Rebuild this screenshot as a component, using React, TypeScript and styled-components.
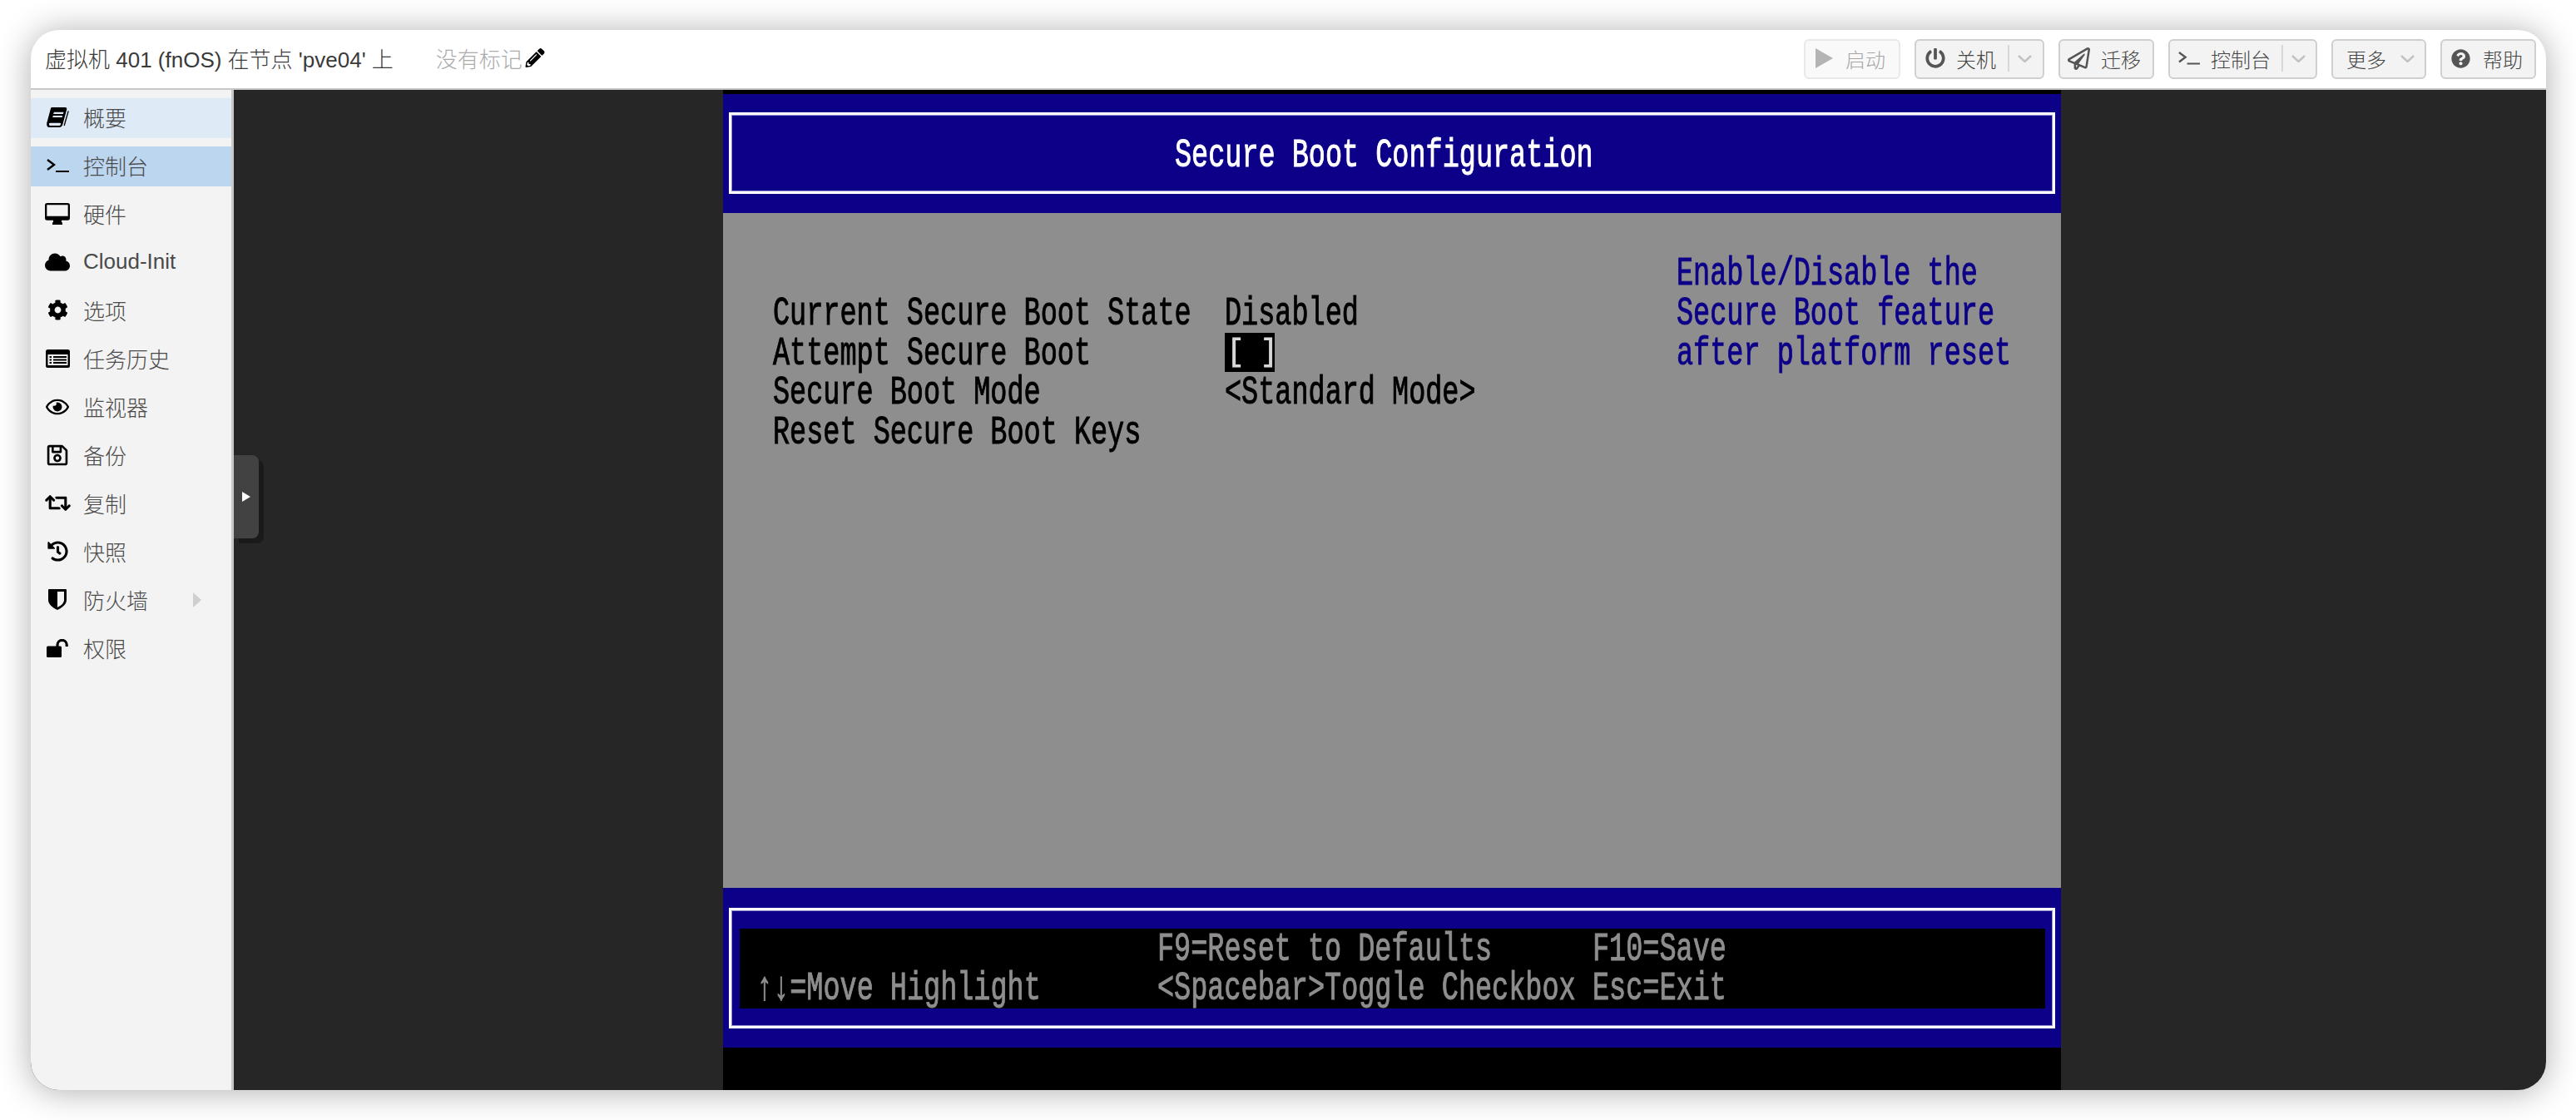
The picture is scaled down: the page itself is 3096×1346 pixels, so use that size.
import React from "react";
import styled, { createGlobalStyle } from "styled-components";
import {
  FaCloud, FaCog, FaRegEye, FaRegSave, FaRetweet, FaHistory,
  FaPencilAlt, FaPowerOff, FaRegPaperPlane, FaQuestionCircle,
} from "react-icons/fa";

const COL = 20.1;
const ROW = 47.75;

const Global = createGlobalStyle`
  html, body { margin: 0; padding: 0; background: #fff; }
  body { font-family: "Liberation Sans", "Noto Sans CJK SC", sans-serif; font-weight: 300; }
`;

const Page = styled.div`
  width: 3096px;
  height: 1346px;
  padding: 36px 36px 36px 37px;
  box-sizing: border-box;
  overflow: hidden;
`;
const Win = styled.div`
  width: 3023px;
  height: 1274px;
  border-radius: 34px;
  box-shadow: 0 2px 40px rgba(0, 0, 0, 0.32);
  overflow: hidden;
  display: flex;
  flex-direction: column;
  background: #fff;
`;
const Header = styled.header`
  flex: none;
  height: 70px;
  border-bottom: 2px solid #c8c8c8;
  display: flex;
  align-items: center;
  padding: 0 12px 0 17px;
`;
const Title = styled.div`
  font-size: 26px;
  color: #3a3a3a;
  white-space: pre;
  padding-bottom: 3px;
`;
const Tags = styled.div`
  margin-left: 51px;
  padding-bottom: 3px;
  font-size: 26px;
  color: #ababab;
  display: flex;
  align-items: center;
  gap: 3px;
  svg { color: #000; width: 24px; height: 23px; }
`;
const Toolbar = styled.div`
  margin-left: auto;
  display: flex;
  gap: 17px;
`;
const Btn = styled.div<{ $w: number; $pl: number; $disabled?: boolean }>`
  box-sizing: border-box;
  width: ${(p) => p.$w}px;
  height: 48px;
  padding-left: ${(p) => p.$pl}px;
  padding-bottom: 2px;
  border-radius: 6px;
  border: 2px solid ${(p) => (p.$disabled ? "#e9e9e9" : "#cfcfcf")};
  background: ${(p) => (p.$disabled ? "#f9f9f9" : "#f3f3f3")};
  color: ${(p) => (p.$disabled ? "#a6a6a6" : "#444")};
  display: flex;
  align-items: center;
  font-size: 24px;
  white-space: nowrap;
`;
const BtnIcon = styled.span<{ $w: number; $gap: number; $dim?: boolean }>`
  width: ${(p) => p.$w}px;
  margin-right: ${(p) => p.$gap}px;
  display: flex;
  color: ${(p) => (p.$dim ? "#b4b4b4" : "#555")};
  svg { width: 100%; height: auto; display: block; }
`;
const Sep = styled.span<{ $l: number }>`
  width: 2px;
  height: 32px;
  margin: 0 10px 0 ${(p) => p.$l}px;
  background: #d8d8d8;
`;
const Chevron = styled.svg<{ $l?: number }>`
  width: 17px;
  height: 9px;
  margin-left: ${(p) => p.$l ?? 0}px;
  fill: none;
  stroke: #c2c2c2;
  stroke-width: 2.5;
`;
const Main = styled.main`
  flex: 1;
  min-height: 0;
  display: flex;
  position: relative;
  background: #262626;
`;
const Sidebar = styled.nav`
  flex: none;
  box-sizing: border-box;
  width: 244px;
  padding-top: 10px;
  background: #f3f3f3;
  border-right: 3px solid #c8c8c8;
  display: flex;
  flex-direction: column;
  gap: 10px;
`;
const NavItem = styled.div<{ $state?: "hover" | "active" }>`
  box-sizing: border-box;
  height: 48px;
  display: flex;
  align-items: center;
  padding: 0 0 3px 14px;
  font-size: 26px;
  color: #4a4a4a;
  position: relative;
  background: ${(p) => (p.$state === "hover" ? "#dfeaf7" : p.$state === "active" ? "#bcd6f0" : "transparent")};
`;
const NavIcon = styled.span`
  flex: none;
  width: 36px;
  margin-right: 13px;
  display: flex;
  justify-content: center;
  color: #000;
  svg { display: block; }
`;
const NavArrow = styled.span`
  margin-left: auto;
  margin-right: 36px;
  width: 0;
  height: 0;
  border-style: solid;
  border-width: 9px 0 9px 10px;
  border-color: transparent transparent transparent #cfcfcf;
`;
const Toggle = styled.div`
  position: absolute;
  left: 244px;
  top: 439px;
  width: 30px;
  height: 100px;
  box-sizing: border-box;
  background: #424242;
  border-radius: 0 8px 8px 0;
  box-shadow: 6px 6px 0 #1a1a1a;
  display: flex;
  align-items: center;
  padding-left: 10px;
`;
const ToggleArrow = styled.span`
  width: 0;
  height: 0;
  border-style: solid;
  border-width: 6px 0 6px 10px;
  border-color: transparent transparent transparent #fff;
`;
const Screen = styled.div`
  flex: none;
  width: 1608px;
  margin-left: 588px;
  padding-top: 5px;
  box-sizing: border-box;
  background: #000;
  display: flex;
  flex-direction: column;
`;
const Banner = styled.div`
  flex: none;
  height: 143px;
  box-sizing: border-box;
  padding: 22px 7px 23px;
  background: #0d0088;
`;
const Frame = styled.div`
  box-sizing: border-box;
  height: 100%;
  border: 3px solid #fff;
  outline: 1px solid #8f8bd0;
  outline-offset: -4px;
  display: flex;
  align-items: center;
`;
const TitleFrame = styled(Frame)`
  padding: 3px 0 0 ${27 * COL - 10}px;
`;
const FooterFrame = styled(Frame)`
  padding: 0 9px 0 10px;
`;
const Body = styled.div`
  flex: none;
  height: 811px;
  box-sizing: border-box;
  padding: 48px 0 0 ${3 * COL}px;
  background: #8e8e8e;
  display: grid;
  grid-template-columns: ${27 * COL}px ${27 * COL}px 1fr;
  grid-auto-rows: ${ROW}px;
`;
const Foot = styled.div`
  flex: none;
  height: 192px;
  box-sizing: border-box;
  padding: 24px 7px 23px;
  background: #0d0088;
`;
const FootGrid = styled.div`
  flex: 1;
  height: 96px;
  box-sizing: border-box;
  padding-left: ${COL}px;
  background: #000;
  display: grid;
  grid-template-columns: ${24 * COL}px ${26 * COL}px 1fr;
  grid-auto-rows: ${ROW}px;
`;
const BiosText = styled.div<{ $c: string }>`
  font-family: "Liberation Mono", monospace;
  font-weight: 400;
  font-size: 48px;
  line-height: ${ROW}px;
  height: ${ROW}px;
  width: 0;
  white-space: pre;
  color: ${(p) => p.$c};
  -webkit-text-stroke: 1px ${(p) => p.$c};
  filter: blur(0.35px);
  transform: translateY(2px) scaleX(0.698);
  transform-origin: left center;
`;
const Highlight = styled.div`
  width: ${3 * COL}px;
  height: ${ROW}px;
  background: #000;
`;
const Brackets = styled(BiosText)`
  font-size: 36px;
  transform: translateX(3px) scaleX(0.93);
`;

const Terminal = ({ w = 27 }: { w?: number }) => (
  <svg width={w} height={(w * 16) / 27} viewBox="0 0 27 16" fill="none" stroke="currentColor" style={{ display: "block" }}>
    <polyline points="1,1 9,7 1,13" strokeWidth="2.4" />
    <line x1="11" y1="15" x2="27" y2="15" strokeWidth="2.2" />
  </svg>
);
const Shield = () => (
  <svg width="22" height="25" viewBox="0 0 22 25">
    <path
      fillRule="evenodd"
      d="M1 0H21a1 1 0 0 1 1 1V13C22 19 15 23 11 25C7 23 0 19 0 13V1A1 1 0 0 1 1 0ZM11 3V22C14 20.5 19 17.500 19 13V3Z"
      fill="currentColor"
    />
  </svg>
);
const Book = () => (
  <svg width="27" height="24" viewBox="0 0 80 72">
    <path
      fill="currentColor"
      fillRule="evenodd"
      d="M18 0H66Q74 0 72 8L58 60Q55 72 45 72H9Q0 72 0 60Q0 56 2 50L14 6Q15 0 18 0ZM26 17H61L59 24H24ZM23 30H57L55 36H21ZM8 61Q7 56 12 56H47Q52 56 51 60Q50 66 45 66H12Q8 66 8 61Z"
    />
    <path fill="none" stroke="currentColor" strokeWidth="4" d="M78 13L63 66" />
  </svg>
);
const Desktop = () => (
  <svg width="30" height="26" viewBox="0 0 90 78">
    <path
      fill="currentColor"
      fillRule="evenodd"
      d="M8 0H82A8 8 0 0 1 90 8V54A8 8 0 0 1 82 62H60V70H63V78H27V70H30V62H8A8 8 0 0 1 0 54V8A8 8 0 0 1 8 0ZM7 7V47H83V7Z"
    />
  </svg>
);
const ListAlt = () => (
  <svg width="29" height="22" viewBox="0 0 29 22">
    <path
      fill="currentColor"
      fillRule="evenodd"
      d="M2.500 0H26.500A2.500 2.500 0 0 1 29 2.500V19.500A2.500 2.500 0 0 1 26.500 22H2.500A2.500 2.500 0 0 1 0 19.500V2.500A2.500 2.500 0 0 1 2.500 0ZM2.500 6V19H26.500V6Z"
    />
    <path fill="currentColor" d="M4.500 8H7V10H4.500ZM9 8H25V10H9ZM4.500 11.500H7V13.500H4.500ZM9 11.500H25V13.500H9ZM4.500 15H7V17H4.500ZM9 15H25V17H9Z" />
  </svg>
);
const Unlock = () => (
  <svg width="26" height="22" viewBox="0 0 26 22">
    <path fill="currentColor" d="M1.500 8.500H16.500A1.500 1.500 0 0 1 18 10V20.500A1.500 1.500 0 0 1 16.500 22H1.500A1.500 1.500 0 0 1 0 20.500V10A1.500 1.500 0 0 1 1.500 8.500Z" />
    <path fill="none" stroke="currentColor" strokeWidth="3.200" d="M13 9V7A5.500 5.500 0 0 1 24.200 7V9" />
  </svg>
);
const Play = () => (
  <svg viewBox="0 0 21 24">
    <polygon fill="currentColor" points="0,0 21,12 0,24" />
  </svg>
);
const ChevronDown = ({ l }: { l?: number }) => (
  <Chevron $l={l} viewBox="0 0 17 9">
    <polyline points="1,1 8.500,8 16,1" />
  </Chevron>
);

const nav = [
  { t: "概要", i: <Book />, s: "hover" as const },
  { t: "控制台", i: <Terminal />, s: "active" as const },
  { t: "硬件", i: <Desktop /> },
  { t: "Cloud-Init", i: <FaCloud size={30} /> },
  { t: "选项", i: <FaCog size={25} /> },
  { t: "任务历史", i: <ListAlt /> },
  { t: "监视器", i: <FaRegEye size={28} /> },
  { t: "备份", i: <FaRegSave size={28} /> },
  { t: "复制", i: <FaRetweet size={31} /> },
  { t: "快照", i: <FaHistory size={25} /> },
  { t: "防火墙", i: <Shield />, arrow: true },
  { t: "权限", i: <Unlock /> },
];

export default function App() {
  return (
    <Page>
      <Global />
      <Win>
        <Header>
          <Title>虚拟机 401 (fnOS) 在节点 'pve04' 上</Title>
          <Tags>
            没有标记
            <FaPencilAlt />
          </Tags>
          <Toolbar>
            <Btn $w={116} $pl={12} $disabled>
              <BtnIcon $w={21} $gap={15} $dim><Play /></BtnIcon>启动
            </Btn>
            <Btn $w={156} $pl={11}>
              <BtnIcon $w={24} $gap={13}><FaPowerOff /></BtnIcon>关机
              <Sep $l={14} /><ChevronDown />
            </Btn>
            <Btn $w={115} $pl={9}>
              <BtnIcon $w={27} $gap={13}><FaRegPaperPlane /></BtnIcon>迁移
            </Btn>
            <Btn $w={179} $pl={10}>
              <BtnIcon $w={26} $gap={13}><Terminal w={26} /></BtnIcon>控制台
              <Sep $l={13} /><ChevronDown />
            </Btn>
            <Btn $w={114} $pl={16}>
              更多<ChevronDown l={17} />
            </Btn>
            <Btn $w={115} $pl={11}>
              <BtnIcon $w={23} $gap={15}><FaQuestionCircle /></BtnIcon>帮助
            </Btn>
          </Toolbar>
        </Header>
        <Main>
          <Sidebar>
            {nav.map((n) => (
              <NavItem key={n.t} $state={n.s}>
                <NavIcon>{n.i}</NavIcon>
                {n.t}
                {n.arrow && <NavArrow />}
              </NavItem>
            ))}
          </Sidebar>
          <Toggle><ToggleArrow /></Toggle>
          <Screen>
            <Banner>
              <TitleFrame>
                <BiosText $c="#fff">Secure Boot Configuration</BiosText>
              </TitleFrame>
            </Banner>
            <Body>
              <span /><span />
              <BiosText $c="#0d0088">Enable/Disable the</BiosText>
              <BiosText $c="#000">Current Secure Boot State</BiosText>
              <BiosText $c="#000">Disabled</BiosText>
              <BiosText $c="#0d0088">Secure Boot feature</BiosText>
              <BiosText $c="#000">Attempt Secure Boot</BiosText>
              <Highlight><Brackets $c="#d8d8d8">[ ]</Brackets></Highlight>
              <BiosText $c="#0d0088">after platform reset</BiosText>
              <BiosText $c="#000">Secure Boot Mode</BiosText>
              <BiosText $c="#000">&lt;Standard Mode&gt;</BiosText>
              <span />
              <BiosText $c="#000">Reset Secure Boot Keys</BiosText>
            </Body>
            <Foot>
              <FooterFrame>
                <FootGrid>
                  <span />
                  <BiosText $c="#8e8e8e">F9=Reset to Defaults</BiosText>
                  <BiosText $c="#8e8e8e">F10=Save</BiosText>
                  <BiosText $c="#8e8e8e">↑↓=Move Highlight</BiosText>
                  <BiosText $c="#8e8e8e">&lt;Spacebar&gt;Toggle Checkbox</BiosText>
                  <BiosText $c="#8e8e8e">Esc=Exit</BiosText>
                </FootGrid>
              </FooterFrame>
            </Foot>
          </Screen>
        </Main>
      </Win>
    </Page>
  );
}
